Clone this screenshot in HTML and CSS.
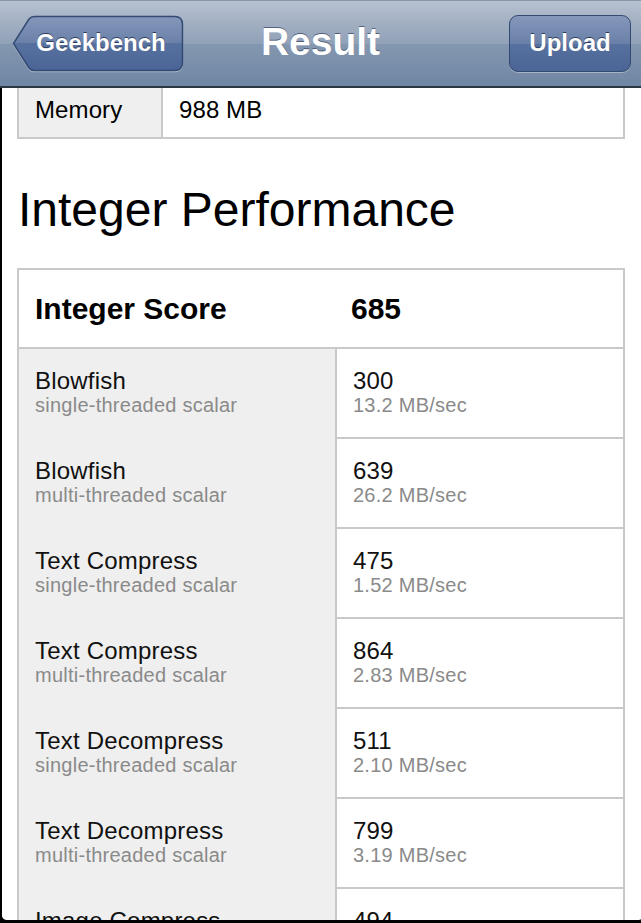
FILE: index.html
```html
<!DOCTYPE html>
<html>
<head>
<meta charset="utf-8">
<link rel="stylesheet" href="styles.css">
</head>
<body>
<div class="screen">
  <header class="navbar">
    <a class="btn btn-back">
      <svg class="btn-shape" width="172" height="57" viewBox="0 0 172 57">
        <defs>
          <linearGradient id="bg1" x1="0" y1="0" x2="0" y2="1">
            <stop offset="0" stop-color="#8598bb"/>
            <stop offset="0.5" stop-color="#6a80a8"/>
            <stop offset="0.5" stop-color="#57719f"/>
            <stop offset="1" stop-color="#4a6596"/>
          </linearGradient>
        </defs>
        <path d="M22.5 1.5 L162.5 1.5 Q170.5 1.5 170.5 9.5 L170.5 47.5 Q170.5 55.5 162.5 55.5 L22.5 55.5 Q19 55.5 17 53 L1.5 28.5 L17 4 Q19 1.5 22.5 1.5 Z" fill="url(#bg1)" stroke="#334a72" stroke-width="1.5"/>
      </svg>
      <span class="btn-label">Geekbench</span>
    </a>
    <h1 class="nav-title">Result</h1>
    <a class="btn btn-upload"><span class="btn-label">Upload</span></a>
  </header>
  <main class="content">
    <div class="table table-info">
      <div class="info-row">
        <div class="cell cell-label">Memory</div>
        <div class="cell cell-value">988 MB</div>
      </div>
    </div>

    <h2 class="section-title">Integer Performance</h2>

    <div class="table table-bench">
      <div class="score-row">
        <div class="score-label">Integer Score</div>
        <div class="score-value">685</div>
      </div>
      <div class="bench-row">
        <div class="bench-label"><div class="t">Blowfish</div><div class="s">single-threaded scalar</div></div>
        <div class="bench-value"><div class="t">300</div><div class="s">13.2 MB/sec</div></div>
      </div>
      <div class="bench-row">
        <div class="bench-label"><div class="t">Blowfish</div><div class="s">multi-threaded scalar</div></div>
        <div class="bench-value"><div class="t">639</div><div class="s">26.2 MB/sec</div></div>
      </div>
      <div class="bench-row">
        <div class="bench-label"><div class="t">Text Compress</div><div class="s">single-threaded scalar</div></div>
        <div class="bench-value"><div class="t">475</div><div class="s">1.52 MB/sec</div></div>
      </div>
      <div class="bench-row">
        <div class="bench-label"><div class="t">Text Compress</div><div class="s">multi-threaded scalar</div></div>
        <div class="bench-value"><div class="t">864</div><div class="s">2.83 MB/sec</div></div>
      </div>
      <div class="bench-row">
        <div class="bench-label"><div class="t">Text Decompress</div><div class="s">single-threaded scalar</div></div>
        <div class="bench-value"><div class="t">511</div><div class="s">2.10 MB/sec</div></div>
      </div>
      <div class="bench-row">
        <div class="bench-label"><div class="t">Text Decompress</div><div class="s">multi-threaded scalar</div></div>
        <div class="bench-value"><div class="t">799</div><div class="s">3.19 MB/sec</div></div>
      </div>
      <div class="bench-row">
        <div class="bench-label"><div class="t">Image Compress</div><div class="s">single-threaded scalar</div></div>
        <div class="bench-value"><div class="t">494</div><div class="s">4.02 MB/sec</div></div>
      </div>
    </div>
  </main>
</div>
</body>
</html>
```

FILE: styles.css
```css
* { box-sizing: border-box; }

html, body {
  margin: 0;
  padding: 0;
  background: #000;
}

body {
  font-family: "Liberation Sans", Arial, sans-serif;
  color: #000;
}

.screen {
  width: 641px;
  height: 923px;
  display: flex;
  flex-direction: column;
  overflow: hidden;
}

/* ---------- nav bar ---------- */
.navbar {
  flex: 0 0 88px;
  display: flex;
  align-items: center;
  justify-content: space-between;
  padding: 0 10px 2px 12px;
  background: linear-gradient(#b7c2d1 0%, #a3b0c3 25%, #91a1b7 50%, #8497b0 51%, #6f86a4 100%);
  border-top: 1px solid #8a97aa;
  border-bottom: 2px solid #2d3644;
  position: relative;
}

.btn {
  height: 57px;
  display: flex;
  align-items: center;
  justify-content: center;
  color: #fff;
  font-weight: bold;
  font-size: 24px;
  text-shadow: 0 -1px 0 rgba(20, 35, 65, 0.75);
  text-decoration: none;
}

.btn-back {
  width: 172px;
  position: relative;
  padding-left: 6px;
  margin-top: 1px;
}

.btn-shape {
  position: absolute;
  left: 0;
  top: 0;
  filter: drop-shadow(0 1px 0 rgba(255,255,255,0.35));
}

.btn-label {
  position: relative;
}

.btn-upload {
  width: 122px;
  margin-top: 1px;
  border: 1.5px solid #334a72;
  border-radius: 9px;
  background: linear-gradient(#8598bb 0%, #6a80a8 50%, #57719f 50%, #4a6596 100%);
  box-shadow: 0 1px 0 rgba(255,255,255,0.35);
}

.nav-title {
  margin: 0;
  font-size: 39px;
  font-weight: bold;
  color: #fff;
  text-shadow: 0 -1px 0 rgba(50, 65, 90, 0.7);
  position: absolute;
  left: 0;
  right: 0;
  top: 19px;
  text-align: center;
  pointer-events: none;
}

/* ---------- content ---------- */
.content {
  flex: 1;
  background: #fff;
  border-left: 2px solid #000;
  border-bottom: 3px solid #000;
  border-bottom-left-radius: 7px;
  border-bottom-right-radius: 4px;
  overflow: hidden;
  padding-left: 15px;
  padding-right: 16px;
}

.table {
  border: 2px solid #c9c9c9;
  width: 608px;
}

.table-info {
  border-top: none;
}

.info-row {
  display: grid;
  grid-template-columns: 144px 1fr;
  height: 49px;
}

.cell {
  font-size: 24px;
  line-height: 26px;
  padding: 9px 16px 0;
  letter-spacing: 0.1px;
}

.cell-label {
  background: #efefef;
  border-right: 2px solid #c9c9c9;
}

.section-title {
  margin: 0;
  font-weight: normal;
  font-size: 48px;
  line-height: 56px;
  padding: 43px 0 30px 1px;
}

/* ---------- bench table ---------- */
.score-row {
  display: grid;
  grid-template-columns: 316px 1fr;
  height: 79px;
  border-bottom: 2px solid #c9c9c9;
  font-size: 30px;
  font-weight: bold;
  line-height: 34px;
  align-items: center;
}

.score-label { padding-left: 16px; }
.score-value { padding-left: 16px; }

.bench-row {
  display: grid;
  grid-template-columns: 318px 1fr;
  height: 90px;
}

.bench-label {
  background: #efefef;
  border-right: 2px solid #c9c9c9;
  padding: 19px 16px 0;
}

.bench-value {
  border-bottom: 2px solid #c9c9c9;
  padding: 19px 16px 0;
}

.t {
  font-size: 24px;
  line-height: 26px;
  color: #111;
  letter-spacing: 0.2px;
}

.s {
  font-size: 20px;
  line-height: 22px;
  color: #8a8a8a;
  letter-spacing: 0.25px;
}
```
